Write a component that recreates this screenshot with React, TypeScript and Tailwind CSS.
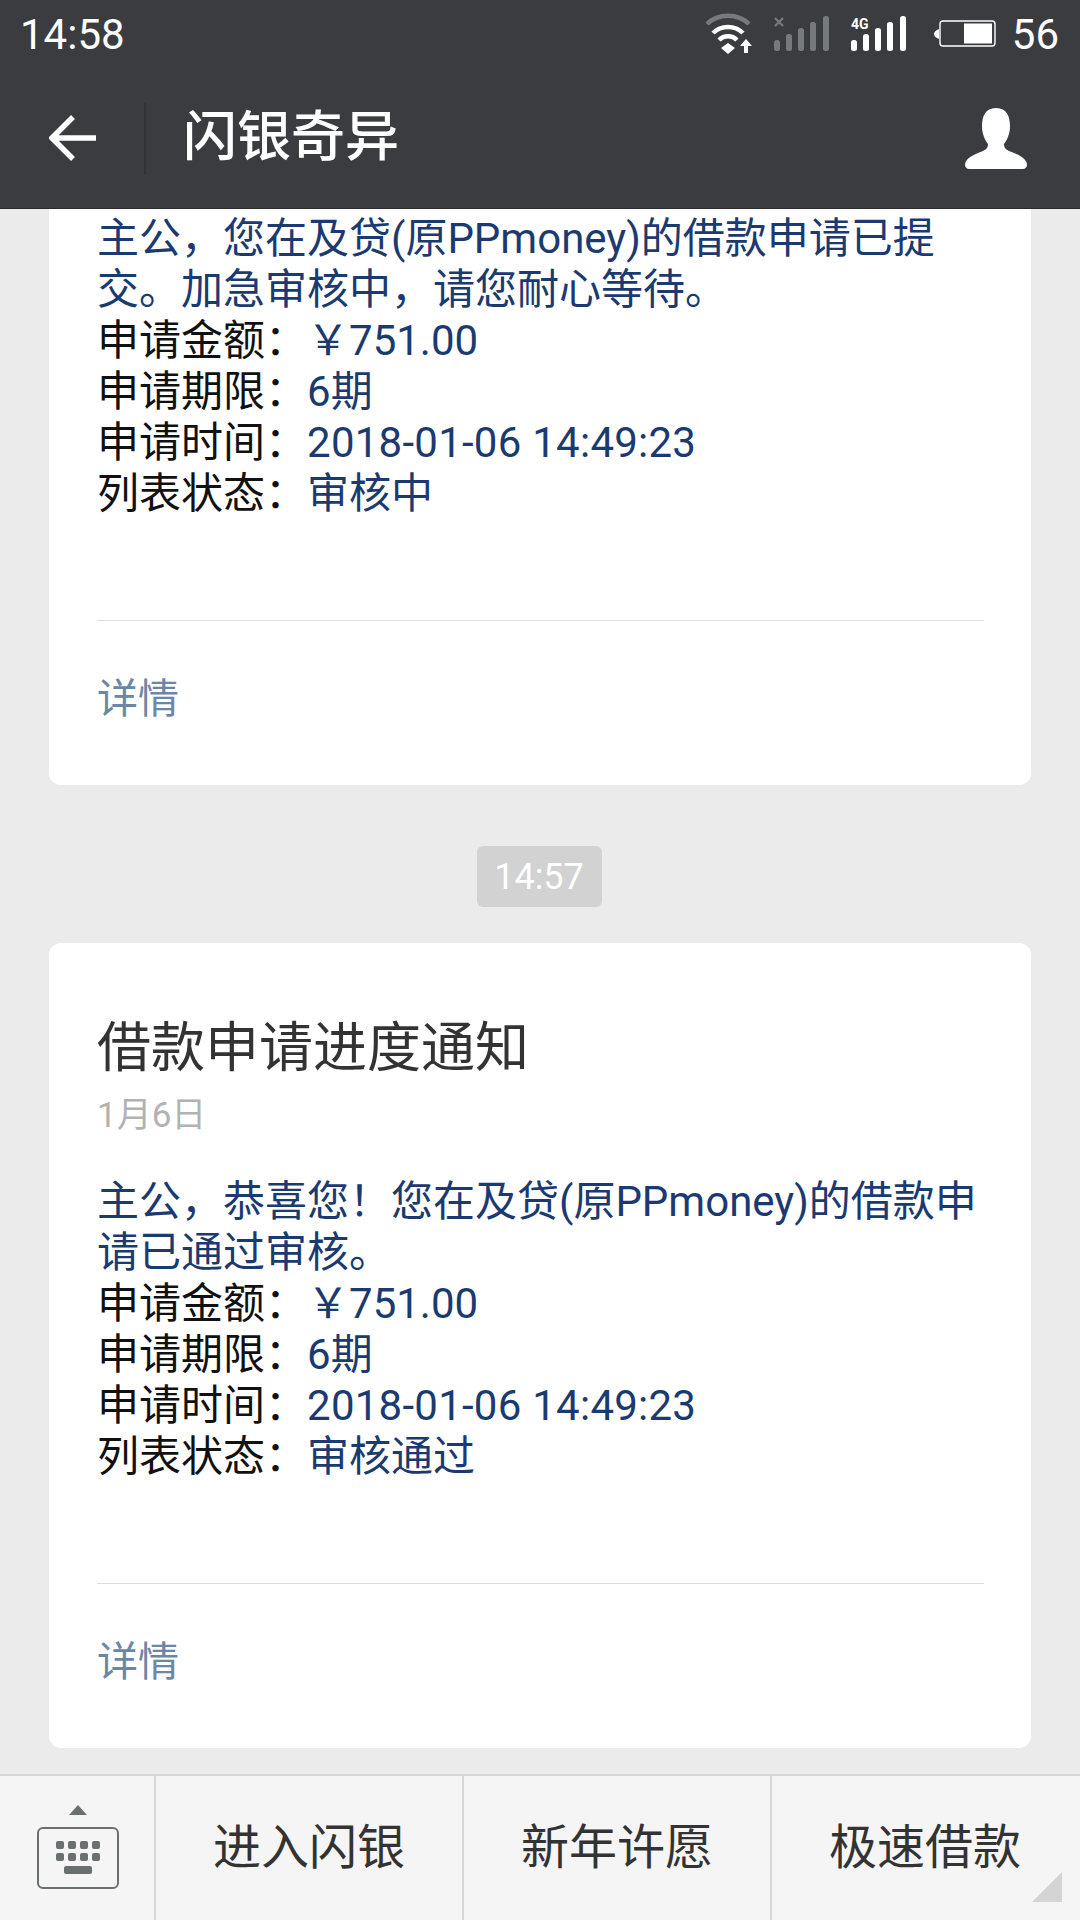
const font = { fontFamily: 'Roboto, "Noto Sans CJK SC", sans-serif' };

function Row({ label, value, wide }: { label: string; value: string; wide?: boolean }) {
  return (
    <div className="h-[51px] leading-[51px] whitespace-nowrap">
      <span className="text-[#111111]">{label}：</span>
      <span className={wide ? 'tracking-[0.25px] text-[#1b3a70]' : 'text-[#1b3a70]'}>{value}</span>
    </div>
  );
}

function Details() {
  return (
    <>
      <div className="mt-[101px] h-px w-[887px] bg-[#dcdcdc]" />
      <div className="mt-[53px] h-[51px] leading-[51px] text-[41px] text-[#6b87a6]">详情</div>
      <div className="h-[60px]" />
    </>
  );
}

function Wifi() {
  return (
    <svg width="48" height="42" viewBox="0 0 48 42" fill="none">
      <path d="M2 11C13 0 33 0 44 11" stroke="#777a7d" strokeWidth="4.5" />
      <path d="M8 20C16 12 30 12 38 20" stroke="#fff" strokeWidth="4.5" />
      <path d="M14 27C19 22 27 22 32 27" stroke="#fff" strokeWidth="4.5" />
      <path d="M16 35L23 30L30 35L23 41Z" fill="#fff" />
      <path d="M41 26L47 33H43V40H39V33H35Z" fill="#fff" />
    </svg>
  );
}

function Signal({ color, tag }: { color: string; tag: 'x' | '4g' }) {
  return (
    <svg width="56" height="36" viewBox="0 0 56 36">
      <rect x="0" y="24" width="6" height="11" rx="2.5" fill={color} />
      <rect x="12" y="18" width="6" height="17" rx="2.5" fill={color} />
      <rect x="24" y="12" width="6" height="23" rx="2.5" fill={color} />
      <rect x="36" y="6" width="6" height="29" rx="2.5" fill={color} />
      <rect x="49" y="0" width="6" height="35" rx="2.5" fill={color} />
      {tag === 'x' ? (
        <path d="M1 2L9 10M9 2L1 10" stroke={color} strokeWidth="2.2" />
      ) : (
        <text x="0" y="13" fontSize="14" fontWeight="700" fill="#fff" fontFamily="Roboto, sans-serif">4G</text>
      )}
    </svg>
  );
}

function Battery() {
  return (
    <svg width="62" height="28" viewBox="0 0 62 28">
      <path d="M5 9C2 10 0 12 0 14C0 16 2 18 5 19Z" fill="#fff" />
      <rect x="6" y="1" width="55" height="25" rx="3" fill="none" stroke="#fff" strokeWidth="1.4" />
      <rect x="30" y="3.5" width="28" height="20" fill="#fff" />
    </svg>
  );
}

function Person() {
  return (
    <svg width="62" height="61" viewBox="0 0 62 61">
      <path d="M31 0C20 0 17 9 17 18C17 26 20 32 23 36C23 39 22 41 18 43C10 46 0 50 0 57C0 59 2 61 4 61H58C60 61 62 59 62 57C62 50 52 46 44 43C40 41 39 39 39 36C42 32 45 26 45 18C45 9 42 0 31 0Z" fill="#fff" />
    </svg>
  );
}

function Keyboard() {
  const keys = [0, 1, 2, 3];
  return (
    <div className="flex flex-col items-center pb-[3px]">
      <svg width="18" height="10" viewBox="0 0 18 10"><path d="M9 0L18 10H0Z" fill="#6a6f6f" /></svg>
      <div className="mt-[12px] flex h-[62px] w-[82px] flex-col items-center justify-center gap-[4px] rounded-[6px] border-2 border-[#6a6f6f]">
        {[0, 1].map((r) => (
          <div key={r} className="flex gap-[4px]">
            {keys.map((k) => (
              <div key={k} className="h-[8px] w-[8px] rounded-[2px] bg-[#6a6f6f]" />
            ))}
          </div>
        ))}
        <div className="mt-[1px] h-[8px] w-[28px] rounded-[2px] bg-[#6a6f6f]" />
      </div>
    </div>
  );
}

function MenuButton({ label, corner }: { label: string; corner?: boolean }) {
  return (
    <div className="relative flex w-[308px] items-center justify-center border-l-2 border-[#d6d6d6] text-[48px] text-[#333333]">
      {label}
      {corner && (
        <svg className="absolute bottom-[18px] right-[16px]" width="30" height="30" viewBox="0 0 30 30">
          <path d="M30 0V30H0Z" fill="#d4d4d4" />
        </svg>
      )}
    </div>
  );
}

export default function App() {
  return (
    <div style={font} className="flex h-[1920px] w-[1080px] flex-col overflow-hidden bg-[#ebebeb]">
      <header className="z-10 h-[209px] shrink-0 border-b border-[#2a2b2e] bg-[#3a3c40] text-white">
        <div className="flex h-[68px] items-center pl-[20px] pr-[21px] text-[42px]">
          <span>14:58</span>
          <div className="ml-auto flex items-center">
            <Wifi />
            <div className="ml-[21px]"><Signal color="#777a7d" tag="x" /></div>
            <div className="ml-[21px]"><Signal color="#ffffff" tag="4g" /></div>
            <div className="ml-[27px]"><Battery /></div>
            <span className="ml-[16px]">56</span>
          </div>
        </div>
        <div className="flex h-[140px] items-center">
          <svg className="ml-[49px]" width="48" height="46" viewBox="0 0 48 46" fill="none">
            <path d="M47 23H4M24 2L3 23L24 44" stroke="#fff" strokeWidth="5.5" />
          </svg>
          <div className="ml-[47px] h-[71px] w-[2px] bg-[#303236]" />
          <h1 className="ml-[37px] text-[54px] font-medium leading-none">闪银奇异</h1>
          <div className="ml-auto mr-[53px]"><Person /></div>
        </div>
      </header>

      <main className="flex min-h-0 flex-1 flex-col justify-end overflow-hidden pb-[26px]">
        <section className="shrink-0 mx-[49px] rounded-[12px] bg-white pl-[48px] pt-[60px] text-[42px]">
          <div className="whitespace-nowrap text-[#1b3a70] leading-[51px]">
            主公，您在及贷(原PPmoney)的借款申请已提<br />交。加急审核中，请您耐心等待。
          </div>
          <Row label="申请金额" value="￥751.00" />
          <Row label="申请期限" value="6期" />
          <Row label="申请时间" value="2018-01-06 14:49:23" wide />
          <Row label="列表状态" value="审核中" />
          <Details />
        </section>

        <div className="mt-[61px] mb-[36px] flex justify-center pr-[2px]">
          <div className="flex h-[61px] w-[125px] items-center justify-center rounded-[6px] bg-[#d2d2d2] text-[36px] text-white">14:57</div>
        </div>

        <section className="shrink-0 mx-[49px] rounded-[12px] bg-white pl-[48px] pt-[71px] text-[42px]">
          <h2 className="text-[54px] leading-[70px] text-[#333333]">借款申请进度通知</h2>
          <div className="mt-[7px] text-[35px] leading-[50px] text-[#b2b2b2]">1月6日</div>
          <div className="mt-[35px] whitespace-nowrap text-[#1b3a70] leading-[51px]">
            主公，恭喜您！您在及贷(原PPmoney)的借款申<br />请已通过审核。
          </div>
          <Row label="申请金额" value="￥751.00" />
          <Row label="申请期限" value="6期" />
          <Row label="申请时间" value="2018-01-06 14:49:23" wide />
          <Row label="列表状态" value="审核通过" />
          <Details />
        </section>
      </main>

      <footer className="flex h-[146px] shrink-0 border-t-2 border-[#d6d6d6] bg-[#f5f5f5]">
        <div className="flex w-[154px] items-center justify-center pl-[2px]"><Keyboard /></div>
        <MenuButton label="进入闪银" />
        <MenuButton label="新年许愿" />
        <MenuButton label="极速借款" corner />
      </footer>
    </div>
  );
}
